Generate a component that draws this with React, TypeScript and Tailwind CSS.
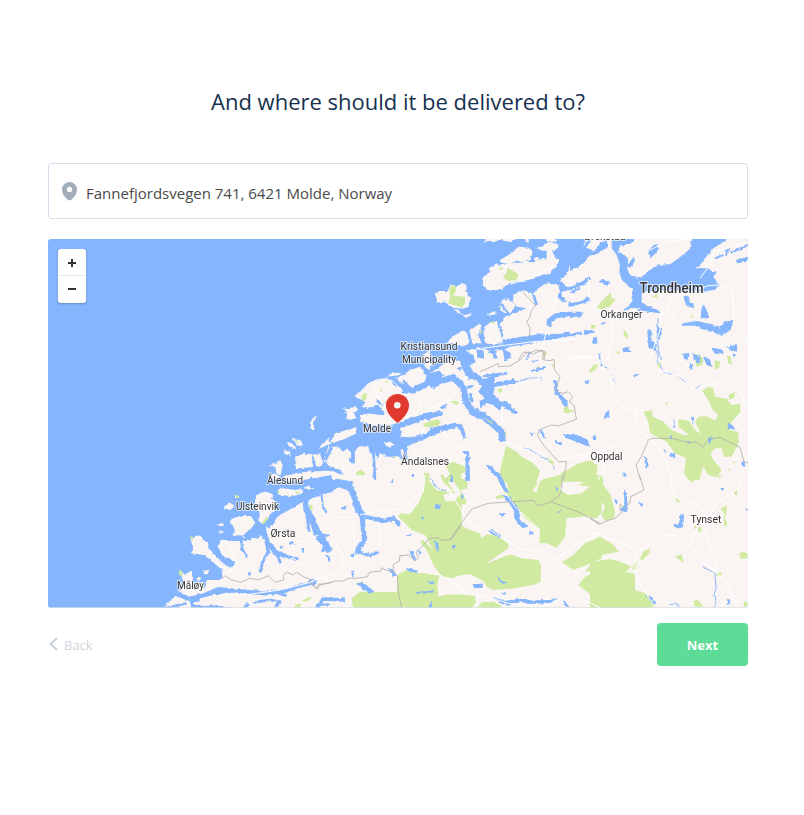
import React from "react";

/* Origins of the map sheets; each sheet is drawn at three units per pixel. */
const sheets = {
  A: "translate(400 235) scale(.33333)",
  B: "translate(570 235) scale(.33333)",
  C: "translate(260 350) scale(.33333)",
  D: "translate(430 350) scale(.33333)",
  E: "translate(580 350) scale(.33333)",
  F: "translate(160 475) scale(.33333)",
  G: "translate(310 475) scale(.33333)",
  H: "translate(450 475) scale(.33333)",
  I: "translate(590 475) scale(.33333)",
};
type Sheet = keyof typeof sheets;
type Layer = Partial<Record<Sheet, string>>;
type Strokes = [Sheet, number, string][];

const land: Layer = {
  A: `M105 178L118 168 145 168 148 152 158 150 165 158 178 150 190 145 200 155 200 178 212 190 205 215 190 222 160 218 140 205 130 200 108 203 110 190Z
    M165 222L175 225 190 240 218 235 200 250 180 235 170 235Z
    M248 150L250 125 275 110 265 100 290 85 298 92 325 85 355 84 385 80 398 82 425 70 440 75 440 45 455 45 462 60 475 75 472 95 455 105 450 118 430 118 405 130 385 135 350 140 320 150 300 165 262 165Z
    M300 75L325 60 340 50 355 35 385 38 398 50 392 72 375 82 350 78 330 86 305 84Z
    M248 20L262 10H355L325 21 300 14 280 22Z M410 40L430 30 445 20 470 25 475 40 450 50 420 45Z M400 70L412 64 418 72 405 78Z M425 8H480L470 20 445 18Z
    M480 135L500 120 510 90 525 100 540 95V150L510 155 495 150Z M485 170L510 165 540 155V195L500 200 485 185Z M375 8H386V24L378 20Z
    M298 205L315 190 335 200 345 210 335 230 315 235 300 225Z M262 238L285 228 288 238 262 242Z
    M340 180L365 165 400 175 415 160 440 145 475 150 480 170 470 185 490 200 545 205V292L510 290 470 300 420 300 380 308 320 318 305 313 310 300 300 270 315 245 380 220 350 215 340 205Z
    M140 320L165 300 195 285 205 300 210 320 195 335 170 330Z M205 290L225 275 240 265 245 275 235 300 245 325 215 325Z M250 280L270 262 290 260 300 290 310 325 280 328 255 325 245 300Z
    M205 350L235 338 265 345 310 345 330 335 400 325 480 310 520 290 545 285V385H200Z M75 352L100 345 125 350 140 342 155 362 170 375H60Z`,
  B: "M0 8H540V378H0Z",
  C: `M283 135L300 125 325 100 350 88 375 85 395 90 400 105 425 115 430 130 460 130 490 115 505 100 520 100 545 95V195L500 200 460 210 425 217 390 225 340 225 300 215 303 195 320 190 365 195 375 190 355 165 320 175 305 170 318 155 295 145Z
    M380 80L400 68 425 70 415 76Z M405 85L430 75 450 60 480 50 500 75 495 95 470 105 450 118 430 105 420 95Z M490 45L545 15V75L510 65Z
    M248 175L265 178 285 168 295 180 280 190 290 205 270 210 258 205 262 190Z M150 240L150 220 158 205 172 198 160 215 163 240Z
    M175 297L205 265 210 280 225 250 270 238 290 232 288 250 260 265 215 280Z M80 275L95 280 110 295 105 298 85 285Z M95 267L120 270 130 285 115 287Z M70 300L90 305 92 318 75 312Z
    M105 320L130 312 155 312 160 358H108Z M160 315L180 310 190 345 170 356Z M190 330L205 290 235 290 250 305 260 295 275 310 268 335 285 340 283 300 300 288 325 290 330 310 345 305 350 330 360 310 385 320 410 320 430 330 420 300 440 300 440 290 480 270 545 250V392H230L200 370 230 360 205 345Z
    M420 235L450 225 490 210 545 205V232L500 248 450 262 425 260Z M370 280L390 275 405 285 385 292Z M380 230L402 226 400 238 385 238Z
    M25 378L44 370 60 380 48 392Z M45 345L60 330 68 345 62 375 50 372Z M30 345L55 340 48 352Z M70 378L140 365 200 362 260 368V392H80Z`,
  D: "M0 0H485V395H0Z",
  E: "M0 0H515V395H0Z",
  F: `M350 45L370 40 405 45 430 42 428 55 405 62 370 62 355 58Z M430 38L470 25 515 15V40L460 48Z
    M285 75L295 55 320 50 340 60 335 75 350 80 340 110 325 130 305 145 295 140 300 115 285 100Z
    M210 145L215 130 245 122 275 125 285 145 270 165 245 180 215 185 225 165Z M190 100L210 82 222 95 212 105Z M170 150L188 143 188 154Z M175 170L190 166 190 174Z M222 60L238 65 232 70Z
    M175 215L185 190 210 192 245 195 275 185 300 182 320 170 318 150 350 118 425 78 515 60V402H12L20 385 45 365 35 350 65 345 60 285 75 300 95 285 98 325 130 320 135 345 140 315 185 315 190 290 175 275 150 255 135 240 92 235 100 220 92 195 115 180 130 195 145 200 145 220 165 240 190 265 210 280 228 262 185 240Z
    M130 288L148 284 145 298 133 298Z M110 310L125 307 118 318Z`,
  G: "M0 0H455V405H0Z",
  H: "M0 0H455V405H0Z",
  I: "M0 0H480V405H0Z",
};

const water: Layer = {
  A: `M475 75L490 60 545 40V90L520 95 508 82 495 110 478 130Z M455 8H545V30L510 42 488 45 478 20Z`,
  B: `M125 8H195L190 20 172 30 150 30 145 50 165 60 175 75 172 100 178 118 195 128 215 125 235 108 265 90 300 88 325 70 350 50 365 35 360 20 375 8H475L455 25 430 40 405 70 390 90 375 100 415 100 425 108 440 110 432 125 440 140 450 150 430 165 400 170 300 165 215 170 215 200 232 212 265 225 272 235 245 232 205 225 195 218 150 230 178 212 188 190 185 160 165 145 152 130 148 105 150 90 140 60 125 40Z
    M0 8H48L40 35 75 48 90 25 108 8 115 35 85 55 60 62 40 85 20 98 0 108Z M172 95L190 65 195 80 180 98Z M235 50L250 30 265 28 260 55 240 68Z
    M85 140L100 132 118 142 112 152 95 145Z M340 185L352 182 358 202 370 205 372 220 350 212Z M395 215L405 212 418 250 392 250Z
    M335 265L380 258 420 266 450 278 462 262 490 256 482 285 455 302 420 288 375 272 335 272Z M232 285L244 288 245 320 262 330 255 348 235 335Z M262 275L276 280 270 315 262 305Z
    M155 340L175 335 178 350 158 352Z M70 308L85 310 78 328 66 325Z M38 292L60 282 75 290 45 300Z M92 260L112 262 95 270Z M340 355L358 358 356 375 342 372Z M425 340L440 340 445 358 432 355Z M480 325L490 345 482 350Z
    M368 362L390 360 400 378H375Z M470 335L500 330 502 350 482 345Z M465 45L478 40 470 65Z M498 75L534 65 530 80 500 85Z`,
  D: `M0 0H105L130 18 135 35 120 48 130 68 155 80 165 90 185 78 225 68 195 82 190 98 250 88 265 98 225 105 190 112 192 135 205 150 235 155 245 175 262 185 255 192 228 175 215 168 210 182 190 165 170 158 152 175 150 155 165 145 145 125 155 110 140 90 115 85 98 58 90 35 70 28 40 42 0 70 0 50 30 28 0 35Z
    M140 0L160 2 162 25 142 22Z M178 0L200 2 195 12 175 8Z M225 0L242 10 240 28 228 25Z
    M80 55L95 50 92 62Z M0 72L28 62 42 75 20 90 0 102Z
    M95 302L117 305 119 390H106L108 315Z M168 345L190 350 188 358 210 375 218 392 188 370Z
    M398 252L440 256 470 268 480 292 445 277 410 264Z M375 270L397 278 394 286 378 280Z M328 238L340 248 348 266 332 255Z
    M370 90L380 92 384 125 412 150 412 170 400 168 393 150 375 130Z M30 170L52 162 45 178 32 178Z M305 32L328 30 305 38Z M300 62L345 48 350 55 305 66Z M462 92L478 95 475 102Z
    M300 248L318 250 305 258Z M140 172L150 182 140 182Z M155 185L170 188 160 195Z M0 195L20 198 0 206Z`,
  E: `M335 8L355 18 365 35 350 40Z M370 20L390 30 394 50 380 45Z M312 12L325 10 328 20 315 22Z M330 42L340 45 332 60Z M160 72L178 72 165 80Z M125 0H150V6H130Z M410 0H428L430 12 415 8Z M458 10L468 15 460 20Z
    M72 205L78 185 92 180 85 202 76 208Z M0 258L22 273 28 290 18 290 0 274Z M38 260L46 255 48 270 40 270Z M10 92L25 96 22 102Z M443 216L458 228 465 238 443 238Z M190 318L202 325 205 350 196 350 197 330Z
    M385 262L395 258 392 282 383 272Z M270 310L286 312 282 325 272 318Z M250 298L260 302 256 308Z M268 260L275 255 276 270Z M320 272L332 276 325 282Z M485 335L495 335 492 350 486 346Z M130 368L138 370 134 382Z M334 200H342L338 225Z`,
  F: `M300 20L345 22 350 42 320 48 300 45Z M430 15L515 0V18L470 20 430 35Z M390 200L400 198 402 210 388 206Z M422 220L434 222 430 235Z M358 212L370 215 365 222Z M262 295L275 295 268 304Z M495 240L505 240 504 248Z
    M0 349L52 346 85 365 130 355 175 335 250 345 310 348 270 355 190 352 130 368 98 385 110 392 170 390 225 402H95L85 378 45 362 10 385 0 402Z`,
  G: `M0 10L40 12 80 12 130 20 125 30 90 25 45 35 0 40Z M240 20L248 12 250 25Z M375 88L392 90 390 102 376 102Z M333 122L342 124 338 138Z M92 100L108 92 110 98 98 105Z M290 177L302 178 302 184H290Z M50 240L60 245 56 260Z
    M140 325L155 323 185 343 190 355 165 347Z M0 312L20 315 15 330 0 328Z M125 288L132 290 130 305 126 305Z M375 195L385 205 386 230 378 225Z M298 225L310 230 318 255 308 252Z M320 225L335 232 330 240Z M290 280L325 288 322 294 295 288Z M318 352L372 346 375 352 320 357Z M355 318L370 320 368 328 355 325Z M355 398L365 375 366 398Z M425 215L438 210 430 222Z M420 0L428 5 428 22 422 18Z M303 0H312V5H303Z M232 280L250 285 260 302 250 302Z`,
  H: `M0 0L8 0 8 22 2 20Z M48 0H58V18L50 15Z M35 52L42 65 40 75 34 68Z M138 0L155 5 165 30 175 50 165 52 148 20Z M156 60L180 65 207 105 210 135 234 155 215 160 193 128 193 108 175 80Z M240 165L250 178 242 176Z
    M150 115L168 118 155 125Z M5 215L18 210 12 222Z M318 35L326 38 325 48 318 45Z M318 115L334 105 330 112Z M68 328L98 326 97 338 72 338Z M138 306L168 323 160 327Z M156 353L170 353 162 360Z M110 163L130 167 158 185 145 188Z M290 358L302 364Z M125 366L165 378 215 371 245 377 300 375 325 370 300 384 235 386 215 380 165 390Z M335 372L358 395 350 395Z`,
  I: `M102 45L110 55 113 105 105 110 90 105 104 90Z M75 72L84 78 80 85 74 80Z M145 82L158 85 155 95Z M250 150L268 145 272 118 282 120 278 158 262 160Z M395 38L402 40 398 48Z M465 95L474 102 470 108Z M412 372L420 375 418 390 411 388Z M98 0H108L103 6Z M165 358L185 368 198 388 185 382Z`,
};

/* Fjord arms: sheet, width, course */
const fjords: Strokes = [
  ["A", 15, "M545 238L500 238 470 242 448 256 446 275"], ["A", 8, "M300 205L330 238 M400 178L410 210"], ["A", 11, "M420 303L385 308 305 320"], ["A", 7, "M545 292L515 300 470 300 420 303"], ["A", 9, "M545 205L505 210"], ["A", 8, "M205 290L213 325 M246 275L250 325 M240 345L248 370 M310 340L318 375 M275 345L290 370"],
  ["A", 6, "M390 350L380 375"],
  ["B", 10, "M0 162L45 140 60 128 M0 210L30 205 60 190"], ["B", 6, "M0 175L30 158 M480 55L534 30 M510 80L534 70 M435 70L460 60"], ["B", 8, "M20 45L50 75 M60 12L30 60"], ["B", 3, "M265 250L262 300 265 345 275 375 M90 355L88 375"],
  ["C", 17, "M425 108L460 122 490 108 510 92 545 85"], ["C", 14, "M395 238L440 215 490 200 545 190"], ["C", 15, "M425 285L470 270 510 252 545 238"], ["C", 10, "M305 180L355 180 M215 292L195 330 M280 300L278 340 M435 300L438 330"], ["C", 9, "M108 360L205 352 250 372"], ["C", 8, "M430 90L445 110 M350 150L370 170 M340 300L345 390"],
  ["D", 20, "M0 108L35 92 70 82 100 112 108 155 130 188 160 200 192 225 215 245 217 275"], ["D", 11, "M0 240L45 230 80 224 95 235 105 265"], ["D", 15, "M10 240L75 226"], ["D", 8, "M160 78L230 70 M112 112L130 108 M120 130L128 158 M250 175L255 190"], ["D", 2.5, "M262 96L290 85 335 82 335 92 M280 292L300 300 330 318 355 332 375 354"],
  ["E", 3, "M57 15L65 45 90 58 95 85 108 98"], ["E", 2.5, "M230 0L235 40 255 70 285 70 M295 80L320 98 M345 118L362 105 M282 205L284 235"],
  ["F", 20, "M320 155L345 118 390 92 430 68 515 40"], ["F", 19, "M435 60L440 105 460 140 470 175 495 205 510 230"], ["F", 16, "M175 185L220 190 255 190 295 178 310 170 325 205 350 235 378 245"], ["F", 9, "M375 243L415 252 M318 200L325 230 308 260 300 292"], ["F", 8, "M243 195L248 225 260 245 M440 120L448 170 M468 180L500 182 M355 245L362 265"],
  ["F", 11, "M170 352L210 346 255 350 310 355 370 350 410 335 470 320"], ["F", 8, "M355 355L380 362 M280 382L330 375 360 380 345 395 M15 400L80 385 M265 385L250 402"], ["F", 6, "M145 292L165 300 188 285 M60 290L70 335 M470 390L510 388"],
  ["G", 20, "M0 55L45 40 90 26 125 42 138 80 145 105 162 125"], ["G", 15, "M156 120L163 195 142 225"], ["G", 12, "M165 125L220 138 250 130 270 152"], ["G", 10, "M142 225L125 245 M142 230L180 242 205 230 M0 110L20 155 30 185 45 210 38 230"], ["G", 15, "M0 120L22 165 38 205"], ["G", 6, "M25 180L60 182 M35 60L38 90 48 115"], ["G", 11, "M20 400L40 372 105 375 M130 382L145 398"], ["G", 3, "M360 10L385 42 410 48"],
  ["I", 3, "M338 275L375 295 378 340 372 360 380 380 370 395 M235 390L258 385 268 395"],
];

const parks: Layer = {
  A: `M150 155L165 150 168 168 160 182 195 185 195 205 185 218 145 205 150 185 148 170Z M308 128L320 112 322 98 340 108 355 118 350 135 325 138Z M294 100L310 96 305 106Z M238 282L246 288 242 298Z M270 262L285 258 282 268Z M428 352L438 350 438 360 430 364Z M120 215L132 218Z`,
  B: `M80 220L95 198 122 172 125 190 138 194 118 215 95 222Z M245 185L262 176 262 188Z M62 270L78 270 74 280 64 282Z M160 285L168 288 175 305 170 312 162 300Z M358 245L370 238 366 250Z M140 350L148 350 145 358Z M368 355L395 365 400 378H385Z M470 362L485 370 480 378Z`,
  C: `M303 140L310 130 322 130 318 148 308 155Z M358 115L366 120 364 128Z M375 90L384 95 378 100Z M375 152L384 155 376 162Z M488 222L520 210 540 215 535 228 495 232Z M288 368L302 358 315 368 312 376 290 376Z M492 368L508 370 508 390H495Z M108 270L118 275 112 280Z M398 315L405 320 402 328Z`,
  D: `M228 288L260 305 275 320 310 340 330 362 320 395H205L215 340Z M45 345L70 335 105 350 108 365 95 370 90 395H40L60 370Z M400 175L412 168 418 180 438 180 415 190 402 188Z M202 120L215 114 217 125 208 130Z M62 155L75 148 88 155 80 165Z M0 215L20 208 35 215 25 224 0 222Z M355 395L410 360 450 338 490 330V395Z M340 5L352 8 345 18Z M225 242L230 250 225 262Z M318 50L330 48 325 60Z M362 42L374 45 368 52Z M350 322L372 335 368 348Z M120 175L135 188 M158 200L185 215 190 225Z`,
  E: `M340 10L362 18 368 45 350 50Z M405 30L420 35 418 52 404 60Z M442 15L450 20 456 45 444 38Z M28 60L40 45 55 42 48 58 30 70Z M232 42L242 38 238 56Z M110 5H118V12H110Z M256 156L264 158 260 166Z
    M366 122L385 110 400 115 405 140 430 145 450 148 445 135 465 125 462 145 442 150 455 165 480 162 482 185 455 215 450 240 475 245 476 280 455 320 432 320 425 295 405 295 392 310 400 330 425 360 410 382 385 375 370 350 358 390H325L312 370 318 325 285 310 260 275 210 250 205 215 190 185 216 180 218 200 250 215 275 240 310 255 328 255 295 230 295 208 325 212 350 245 362 250 345 215 355 200 380 198 405 212 415 195 398 180 388 155Z
    M0 345L25 332 52 345 52 365 40 395H0Z M445 355L452 358 446 364Z M460 332L466 338 460 342Z M415 375L425 378 418 386Z`,
  F: `M88 185L100 185 98 198Z M58 285L66 290 64 305 56 298Z M305 145L320 125 325 130 312 148Z M222 58L240 65 232 70Z M352 45L360 50 356 56Z M448 88L458 92 458 108 450 104Z M405 48L420 52 410 58Z M425 378L450 365 455 370 440 380Z M405 388L425 386 420 399H405Z M480 12L495 15 485 20Z`,
  G: `M343 0H400L435 55 415 52 380 45 M343 0L340 50 325 85 300 118 270 115 265 125 285 145 305 165 345 180 370 225 340 195 330 200 350 225 370 270 395 305 430 310 455 295V55L420 90 422 118 405 162 420 150 455 145V80L405 78 400 60 430 50 400 20 390 0Z
    M262 300L290 285 330 295 360 295 388 300 382 330 385 365 410 358 455 365V402H130L125 370 150 350 185 350 240 352 262 350Z M30 15L50 12 55 20Z M135 325L155 320 170 335Z M80 10L98 12 90 16Z`,
  H: `M0 170L22 145 48 160 90 175 95 190 110 178 140 182 175 205 175 220 105 268 180 238 215 250 265 255 273 270 272 320 250 330 180 342 130 345 110 335 100 318 60 298 0 305Z
    M0 0L12 5 15 25 32 50 33 88 48 88 48 75 32 45 52 40 52 20 20 0Z M160 0H250L262 28 248 45 258 55 270 20 280 12 330 0 338 8 330 45 355 60 395 55 420 35 385 30 415 15 420 0H455V115L445 122 395 125 350 130 345 185 320 218 290 205 268 205 270 165 225 130 205 100 185 75 160 50 175 40Z
    M135 65L155 58 165 68 140 72Z M335 262L370 240 405 205 455 185V250L410 270 370 285Z M405 290L425 265 455 260V285Z M385 330L405 305 455 285V390H415L430 365Z M0 360L20 358 75 362 78 380 65 402H0Z M78 402L95 382 130 380 155 392 150 402Z`,
  I: `M25 5L38 5 40 30 62 60 75 110 72 132 45 138 35 120 45 95 22 60Z M0 55L25 65 32 90 25 130 0 130Z M292 0H320L315 15 305 24Z M252 70L270 75 266 84Z M392 100L410 92 410 110 405 125 412 150 402 155 402 115Z M432 52L442 42 440 66Z M312 150L320 155 314 165Z M325 155L335 158 332 170H324Z M150 250L162 228 180 220 178 235 155 258Z M254 245L275 238 282 265 265 252Z M448 235L458 230 472 235 474 250 452 252Z
    M0 200L28 185 65 205 88 230 45 238 0 255Z M0 262L60 252 92 260 125 275 105 292 135 295 135 345 165 355 185 370 195 390 180 402H0Z M378 292L394 292 396 302 380 302Z M310 380L320 372 342 395H315Z M462 380L472 380 472 395H460Z M130 270L140 258 138 285 128 285Z`,
};

const roads: Layer = {
  A: "M380 170L395 240 M470 180L460 235 M330 148L405 125 465 90 M245 340L400 320 545 312 M440 285L425 345",
  B: "M272 235L270 285 240 370 M275 235L295 225 300 185 340 178 415 152 450 150 488 165 492 260 534 325 M55 130L60 200 85 235 130 260 155 240 210 220 M130 260L125 310 112 375 M300 225L320 260 335 275 M230 50L290 20 360 12 M0 365L85 365 M390 130L420 90 430 50 534 20",
  C: "M340 105L350 130 365 160 400 215 M400 215L470 190 485 155 520 110 M395 90L425 120 M250 340L245 385 M460 300L500 350 540 380 M490 240L485 260",
  D: "M0 175L60 150 100 155 M105 200L80 210 50 225 M30 240L80 290 100 285 M215 180L215 225 M220 275L280 295 330 320 M250 132L265 100 330 90 380 60 400 30 450 22 480 22 M385 330L480 310",
  E: "M0 20L50 22 90 58 100 120 125 170 170 185 M170 185L190 155 215 125 240 60 M240 60L300 75 345 120 415 92 450 115 485 130 495 165 515 178 M170 185L162 235 M162 235L200 258 235 290 265 350 275 390 M162 235L110 285 0 325 M80 325L55 390 M240 0L250 15",
  F: "M335 158L360 185 420 200 475 180 M245 180L255 190 M200 200L230 265 200 300 M400 205L400 250 460 290 515 320 M190 360L255 360 360 345 460 320",
  G: "M50 120L70 130 95 125 130 128 M130 140L135 250 M180 70L182 100 165 120 M215 110L270 100 340 50 345 0 M205 140L215 185 200 230 M75 200L100 250 95 290 0 320 M350 295L390 300 455 335 M150 120L215 105",
  H: "M0 50L40 115 70 150 120 165 165 195 210 222 270 230 320 252 345 235 385 205 430 185 430 140 450 120 M320 255L360 310 400 375 450 398 M0 325L50 355 110 365 175 385 275 395 340 370 M165 50L195 95 270 165 M430 175L455 172",
  I: "M0 172L60 188 110 212 135 222 155 225 215 180 260 182 300 215 340 262 380 292 410 320 440 395 M155 225L135 240 135 300 190 390 M240 0L248 50 270 75 320 90 355 130 345 160 365 240 385 295 M300 215L320 160 M355 130L380 85 425 55 445 40 460 5 M425 55L460 85 475 105",
};

const borders: Layer = {
  A: "M368 170L382 185 395 200 407 212 395 225 390 245 380 260 390 280 388 305 M355 375L370 352 395 352 408 345 430 350 428 375",
  D: "M150 65L185 50 205 40 205 50 240 48 270 30 290 8 310 12 335 0 345 5 342 30 360 32 372 28 374 60 390 80 380 110 378 125 400 130 415 125 428 140 418 155 432 165 438 200 440 207 385 228 365 225 330 238 322 255 340 285 385 335 410 335 400 390",
  E: "M182 390L168 345 185 318 205 270 215 265 235 265 275 265 328 278 348 275 368 292 388 268 420 262 445 275 480 292 492 335 505 340",
  F: "M185 312L195 302 215 315 242 322 270 310 295 315 325 302 345 322 370 315 372 298 382 292 400 300 410 292 430 305 448 312 450 318 472 342 480 330 515 322",
  G: "M0 325L20 342 25 328 55 325 75 318 100 318 115 310 140 310 172 305 178 292 212 288 215 278 225 285 250 290 262 302 265 350 275 400 M250 290L250 268 268 258 270 242 298 240 315 258 325 250 318 230 330 222 358 190 385 188 395 196 425 192 455 148",
  H: "M0 195L30 150 65 102 115 85 185 80 252 76 262 90 278 90 302 80 328 62 335 40 337 0 M302 80L395 115 450 145",
  I: "M148 0L162 45 122 65 120 82 105 100 90 88 90 105 98 110 75 130 58 135 28 148 0 130",
};

function Fill({ layer, color }: { layer: Layer; color: string }) {
  return (
    <g fill={color}>
      {(Object.keys(layer) as Sheet[]).map((k) => (
        <path key={k} d={layer[k]} transform={sheets[k]} />
      ))}
    </g>
  );
}

function Lines({ layer, color, width }: { layer: Layer; color: string; width: number }) {
  return (
    <g fill="none" stroke={color} strokeWidth={width} strokeLinejoin="round">
      {(Object.keys(layer) as Sheet[]).map((k) => (
        <path key={k} d={layer[k]} transform={sheets[k]} />
      ))}
    </g>
  );
}

/* Name, centre x, baseline, font size, drawn length */
const labels: [string, number, number, number, number][] = [
  ["Brekstad", 605, 240, 11, 41],
  ["Trondheim", 671.5, 293, 14, 64],
  ["Orkanger", 621.5, 318, 11, 42],
  ["Kristiansund", 429, 350, 11, 57],
  ["Municipality", 429, 362.5, 11, 54],
  ["Molde", 377, 431.5, 11, 28],
  ["Åndalsnes", 425, 465, 11, 48],
  ["Oppdal", 606.5, 460, 11, 32],
  ["Ålesund", 285, 484, 11, 36],
  ["Ulsteinvik", 257.5, 509.5, 11, 43],
  ["Ørsta", 283, 537, 11, 25],
  ["Måløy", 190.5, 589, 11, 27],
  ["Tynset", 706, 522.5, 11, 31],
];

function DeliveryMap() {
  return (
    <svg viewBox="48 239 700 369" className="block h-full w-full bg-[#85b5fd]">
      <defs>
        <filter id="coast" x="40" y="230" width="720" height="390" filterUnits="userSpaceOnUse" colorInterpolationFilters="sRGB">
          <feTurbulence type="fractalNoise" baseFrequency=".25" numOctaves="2" seed="4" />
          <feDisplacementMap in="SourceGraphic" scale="3.2" xChannelSelector="R" yChannelSelector="G" />
        </filter>
      </defs>
      <g filter="url(#coast)">
        <Fill layer={land} color="#faf5f2" />
        <Fill layer={water} color="#85b5fd" />
        <g fill="none" stroke="#85b5fd" strokeLinejoin="round">
          {fjords.map(([sheet, width, d], i) => (
            <path key={i} d={d} strokeWidth={width} transform={sheets[sheet]} />
          ))}
        </g>
      </g>
      <Fill layer={parks} color="#d0eaa2" />
      <g filter="url(#coast)" fill="#85b5fd">
        {(["D", "E", "G", "H", "I"] as Sheet[]).map((k) => (
          <path key={k} d={water[k]} transform={sheets[k]} />
        ))}
      </g>
      <Lines layer={roads} color="#ffffff" width={3} />
      <Lines layer={borders} color="#b4b1ae" width={2.6} />
      <path d="M48 607.5H748" stroke="#d8dfe5" opacity=".7" />
      <g textAnchor="middle" fontFamily="Roboto, sans-serif" fill="#333333" stroke="#ffffff" strokeOpacity=".7" strokeWidth="2" strokeLinejoin="round" paintOrder="stroke">
        {labels.map(([name, x, y, size, length]) => (
          <text key={name} x={x} y={y} fontSize={size} fontWeight={size > 11 ? 500 : 400} textLength={length} lengthAdjust="spacingAndGlyphs">
            {name}
          </text>
        ))}
      </g>
      <path fill="#e03a2f" d="M397.5 394C391 394 386 399 386 405.4C386 412 391 417.6 397.5 423C404 417.6 409 412 409 405.4C409 399 404 394 397.5 394Z" />
      <circle cx="397.3" cy="405.3" r="3.3" fill="#faf5f2" />
    </svg>
  );
}

export default function App() {
  return (
    <main className="h-[815px] w-[804px] bg-white pt-[83px] pr-14 pl-12 font-['Open_Sans',sans-serif]">
      <h1 className="text-center text-[22px] leading-9 text-[#15314f]">And where should it be delivered to?</h1>

      <div className="mt-11 flex h-14 items-center rounded-[3px] border border-[#dcdcec] pl-[13px]">
        <svg viewBox="0 0 15 19" className="h-[19px] w-[15px]">
          <path fillRule="evenodd" fill="#a2adb9" d="M7.5 0A7.5 7.5 0 0 0 0 7.4C0 11.8 3 15.5 6.3 18.1Q7.5 18.9 8.7 18.1C12 15.5 15 11.8 15 7.4A7.5 7.5 0 0 0 7.5 0ZM7.5 4.7A2.7 2.7 0 1 1 7.5 10.1A2.7 2.7 0 1 1 7.5 4.7Z" />
        </svg>
        <span className="mt-1 ml-[9px] text-[15px] leading-5 text-[#4a4a4a]">Fannefjordsvegen 741, 6421 Molde, Norway</span>
      </div>

      <section className="relative mt-5 h-[369px] overflow-hidden rounded-[3px]">
        <DeliveryMap />
        <div className="absolute top-2.5 left-2.5 flex h-[54px] w-7 flex-col rounded-[3px] bg-white px-px shadow-[0_1px_2px_rgba(0,0,0,0.25)]">
          <button aria-label="Zoom in" className="flex h-[27px] items-center justify-center border-b border-[#e6e6e6]">
            <svg viewBox="0 0 8 8" className="mt-px h-2 w-2"><path d="M4 0V8M0 4H8" stroke="#333" strokeWidth="2" /></svg>
          </button>
          <button aria-label="Zoom out" className="flex h-[27px] items-start justify-center pt-[9px]">
            <svg viewBox="0 0 8 8" className="h-2 w-2"><path d="M0 4H8" stroke="#333" strokeWidth="2" /></svg>
          </button>
        </div>
      </section>

      <footer className="mt-[15px] flex h-[43px] items-center justify-between">
        <button className="flex items-center text-[13px] leading-5 text-[#d0d5da]">
          <svg viewBox="0 0 9 14" className="mr-1.5 mb-0.5 ml-px h-3.5 w-[9px]" fill="none" stroke="#c8d0d6" strokeWidth="1.8"><path d="M8 1L1.5 7L8 13" /></svg>
          Back
        </button>
        <button className="flex h-[43px] w-[91px] items-center justify-center rounded-[4px] bg-[#5cdc96] pt-0.5 text-[13px] font-bold text-white">Next</button>
      </footer>
    </main>
  );
}
